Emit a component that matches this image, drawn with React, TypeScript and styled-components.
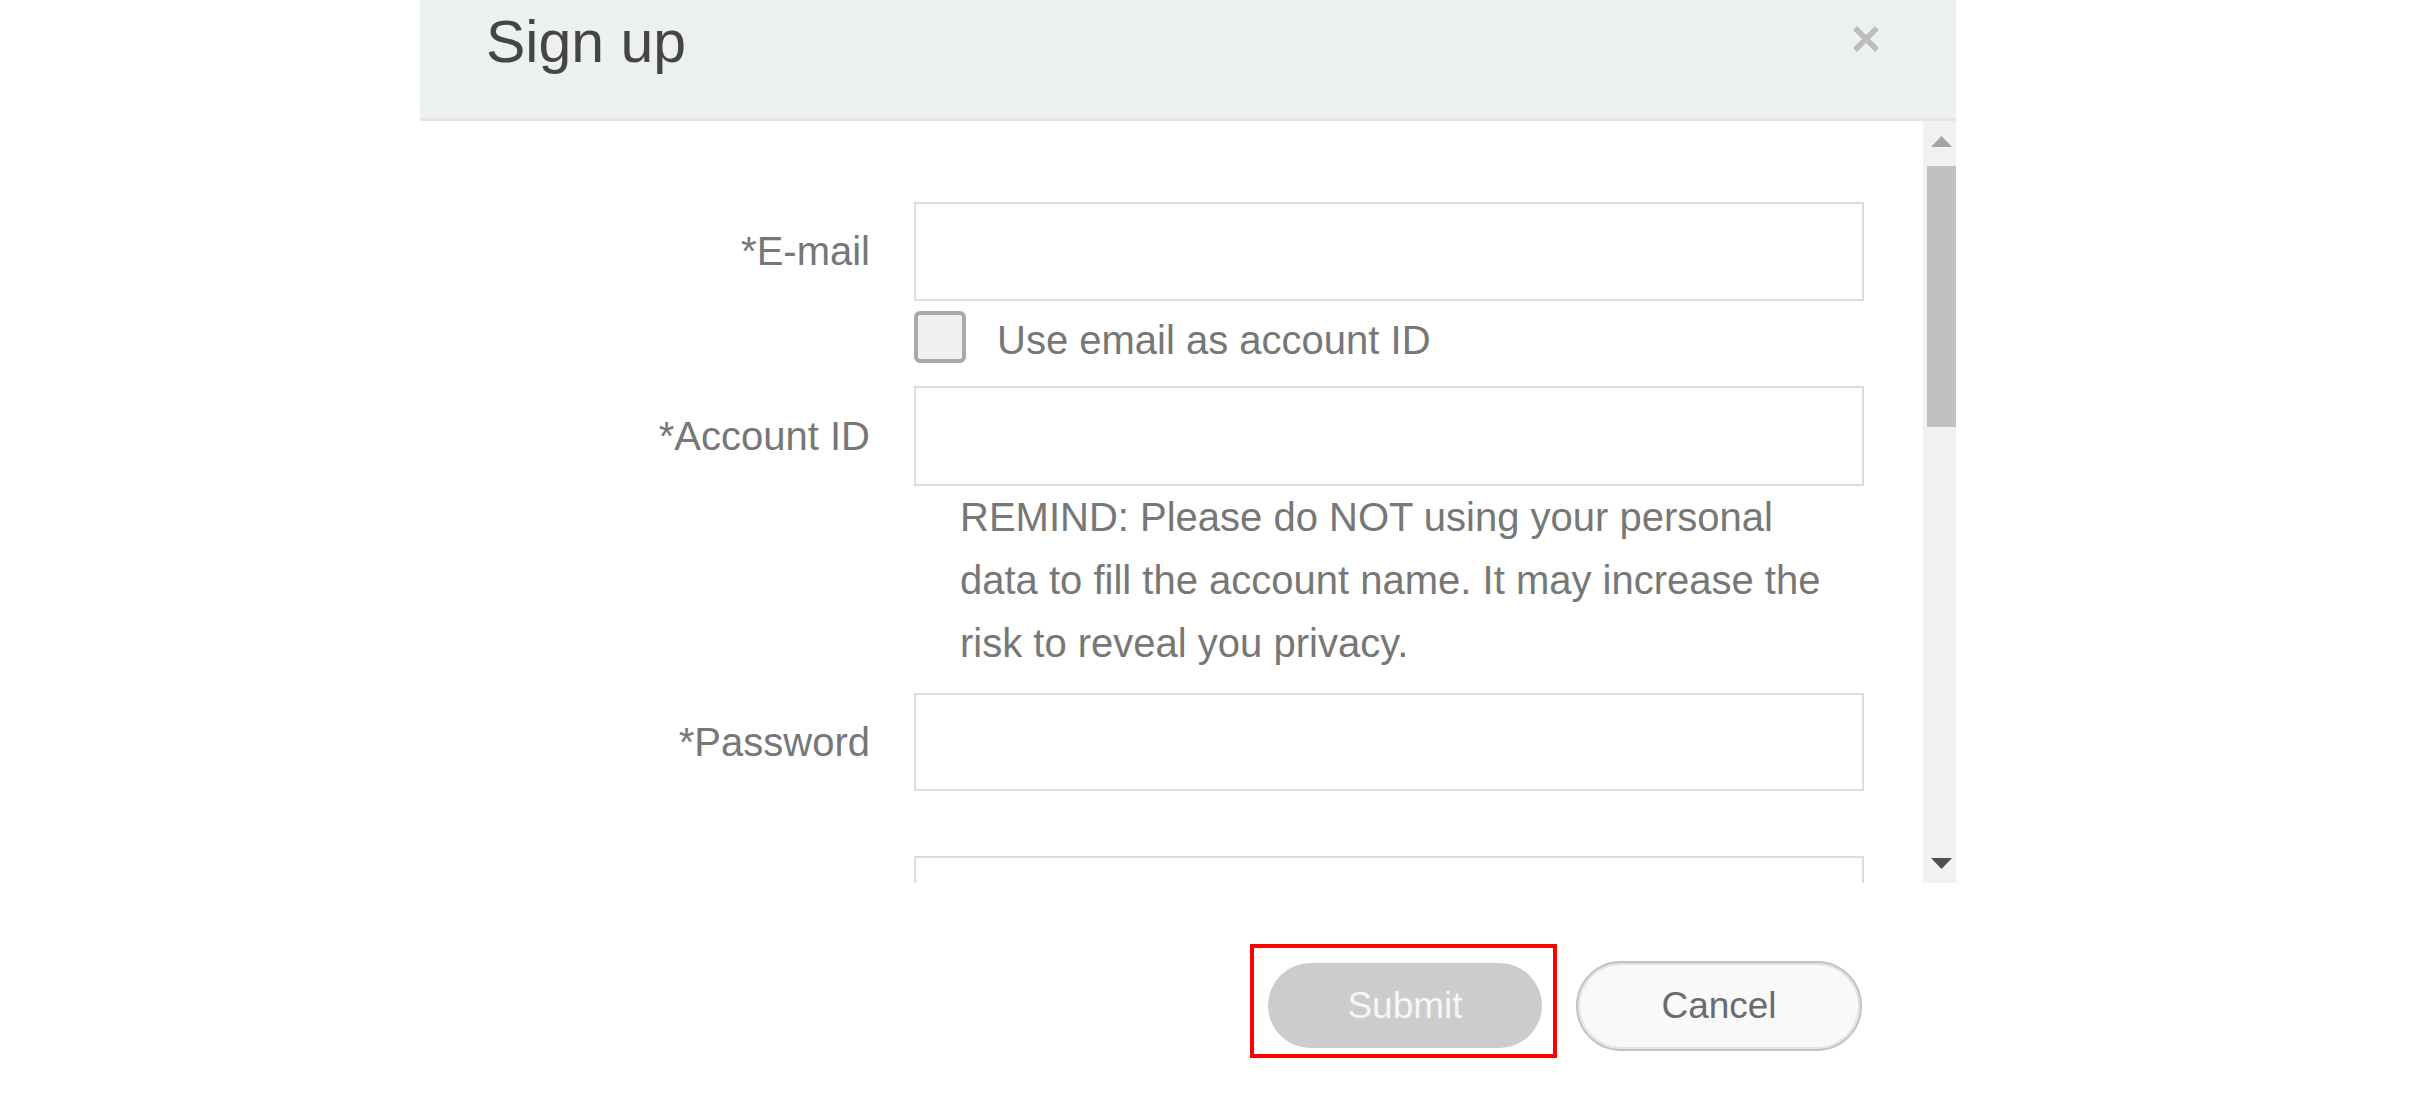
import React from "react";
import styled, { createGlobalStyle } from "styled-components";

const GlobalStyle = createGlobalStyle`
  html, body {
    margin: 0;
    padding: 0;
    background: #ffffff;
  }
  body {
    font-family: "Liberation Sans", Arial, sans-serif;
  }
  * { box-sizing: border-box; }
`;

const Page = styled.div`
  display: flex;
  padding-left: 420px;
  height: 1096px;
  overflow: hidden;
`;

const Modal = styled.div`
  width: 1536px;
  display: flex;
  flex-direction: column;
  background: #ffffff;
`;

const Header = styled.header`
  height: 121px;
  background: #ecf0f1;
  border-bottom: 3px solid #e3e4e4;
  display: flex;
  justify-content: space-between;
  align-items: flex-start;
  padding: 14px 76px 0 66px;
`;

const Title = styled.h1`
  margin: 0;
  font-size: 59px;
  line-height: 57px;
  font-weight: normal;
  color: #454545;
`;

const CloseButton = styled.button`
  margin-top: 11px;
  padding: 0;
  border: none;
  background: transparent;
  width: 28px;
  height: 28px;
  display: flex;
`;

const Body = styled.div`
  display: flex;
  height: 762px;
`;

const Content = styled.div`
  flex: 1;
  overflow: hidden;
  padding-top: 81px;
`;

const Row = styled.div<{ $top?: number }>`
  display: grid;
  grid-template-columns: 450px 950px;
  column-gap: 44px;
  align-items: center;
  margin-top: ${(p) => p.$top ?? 0}px;
`;

const Label = styled.label`
  text-align: right;
  font-size: 40px;
  line-height: 45px;
  color: #777777;
`;

const TextInput = styled.input<{ $h?: number }>`
  width: 950px;
  height: ${(p) => p.$h ?? 99}px;
  border: 2px solid #d9dfdf;
  background: #ffffff;
  outline: none;
  font-size: 36px;
  padding: 0 20px;
`;

const CheckLine = styled.div`
  grid-column: 2;
  display: flex;
  align-items: center;
  gap: 31px;
`;

const CheckBox = styled.span`
  width: 52px;
  height: 52px;
  border: 4px solid #a9a9a9;
  border-radius: 6px;
  background: #f0f0f0;
  flex: none;
`;

const CheckText = styled.span`
  font-size: 40px;
  line-height: 45px;
  color: #777777;
  margin-top: 8px;
`;

const Remind = styled.p`
  grid-column: 2;
  margin: 0;
  padding: 0 26px 0 46px;
  font-size: 40px;
  line-height: 63px;
  color: #777777;
`;

const ScrollBar = styled.div`
  width: 33px;
  background: #f1f1f1;
  display: flex;
  flex-direction: column;
`;

const ScrollButton = styled.div`
  height: 40px;
  display: flex;
  align-items: center;
  justify-content: center;
  padding-left: 4px;
`;

const Track = styled.div`
  flex: 1;
  padding: 5px 0 0 4px;
`;

const Thumb = styled.div`
  height: 261px;
  background: #c1c1c1;
`;

const Footer = styled.footer`
  flex: 1;
  display: flex;
  justify-content: flex-end;
  align-items: flex-start;
  gap: 19px;
  padding: 61px 94px 0 0;
`;

const Highlight = styled.div`
  border: 4px solid #ff0000;
  padding: 15px 11px 6px 14px;
`;

const SubmitButton = styled.button`
  width: 274px;
  height: 85px;
  border: none;
  border-radius: 43px;
  background: #cccccc;
  color: #f6f6f6;
  font-family: "Liberation Sans", Arial, sans-serif;
  font-size: 37px;
  padding: 0;
`;

const CancelButton = styled.button`
  margin-top: 17px;
  width: 286px;
  height: 90px;
  border: 2px solid #c2c2c2;
  box-shadow: inset 0 0 0 2px #e4e4e4;
  border-radius: 45px;
  background: #f9f9f9;
  color: #6b6b6b;
  font-family: "Liberation Sans", Arial, sans-serif;
  font-size: 37px;
  padding: 0;
`;

const Arrow = ({ up, color }: { up?: boolean; color: string }) => (
  <svg width="21" height="11" viewBox="0 0 21 11">
    <polygon points={up ? "10.5,0 21,11 0,11" : "0,0 21,0 10.5,11"} fill={color} />
  </svg>
);

export default function App() {
  return (
    <>
      <GlobalStyle />
      <Page>
        <Modal>
          <Header>
            <Title>Sign up</Title>
            <CloseButton aria-label="close">
              <svg width="28" height="28" viewBox="0 0 28 28">
                <path d="M3 3 L25 25 M25 3 L3 25" stroke="#bcbcbc" strokeWidth="5.5" strokeLinecap="butt" />
              </svg>
            </CloseButton>
          </Header>
          <Body>
            <Content>
              <Row>
                <Label>*E-mail</Label>
                <TextInput $h={99} />
              </Row>
              <Row $top={9}>
                <CheckLine>
                  <CheckBox />
                  <CheckText>Use email as account ID</CheckText>
                </CheckLine>
              </Row>
              <Row $top={23}>
                <Label>*Account ID</Label>
                <TextInput $h={100} />
              </Row>
              <Row>
                <Remind>
                  REMIND: Please do NOT using your personal data to fill the account name. It may increase the risk to reveal you privacy.
                </Remind>
              </Row>
              <Row $top={18}>
                <Label>*Password</Label>
                <TextInput type="password" $h={98} />
              </Row>
              <Row $top={65}>
                <Label />
                <TextInput type="password" $h={99} />
              </Row>
            </Content>
            <ScrollBar>
              <ScrollButton>
                <Arrow up color="#a3a3a3" />
              </ScrollButton>
              <Track>
                <Thumb />
              </Track>
              <ScrollButton>
                <Arrow color="#505050" />
              </ScrollButton>
            </ScrollBar>
          </Body>
          <Footer>
            <Highlight>
              <SubmitButton>Submit</SubmitButton>
            </Highlight>
            <CancelButton>Cancel</CancelButton>
          </Footer>
        </Modal>
      </Page>
    </>
  );
}
